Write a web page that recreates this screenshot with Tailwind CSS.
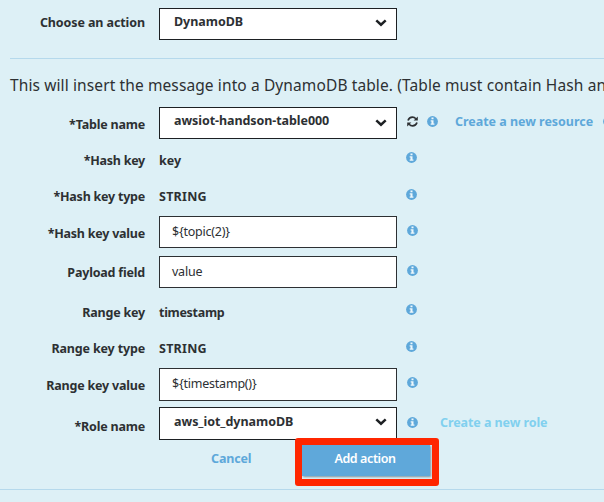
<!DOCTYPE html>
<html lang="en">
<head>
<meta charset="utf-8">
<title>Choose an action</title>
<script src="https://cdn.jsdelivr.net/npm/@tailwindcss/browser@4"></script>
</head>
<body class="h-[502px] w-[604px] overflow-hidden bg-[#ddf0f6] font-['Noto_Sans','Open_Sans',sans-serif] text-[12.5px] leading-[20px] font-bold tracking-[-0.03px] text-[#2d3033]">
<svg class="hidden">
  <symbol id="info" viewBox="0 0 12 12"><circle cx="6" cy="6" r="5.900" fill="#5ea8da"/><path d="M4.900 1.700h2.200v1.800H4.900zM4 4.600h3.100v3.700h1v1.300H4V8.300h.9V5.900H4z" fill="#eef8fc"/></symbol>
  <symbol id="chev" viewBox="0 0 12 8"><path d="M1.300 1.300 6 5.700l4.700-4.400" fill="none" stroke="#1d2023" stroke-width="2.500"/></symbol>
</svg>
<main class="relative flex h-full flex-col pt-2">
  <div class="flex h-[50px] shrink-0 items-start gap-[14px]">
    <label class="mt-[5px] w-[145px] text-right tracking-[-0.1px] whitespace-nowrap">Choose an action</label>
    <div class="flex h-8 w-[238px] justify-between border border-[#1d2023] bg-white pt-[3px] pr-[9px] pl-[14px]"><span>DynamoDB</span><svg class="mt-[7px] h-2 w-3"><use href="#chev"/></svg></div>
  </div>
  <div class="ml-[10px] h-px shrink-0 bg-[#b5d9ec]"></div>
  <p class="h-12 shrink-0 pt-[14px] pl-[10px] text-[15.5px] leading-6 font-normal tracking-[0.11px] whitespace-nowrap">This will insert the message into a DynamoDB table. (Table must contain Hash an</p>

  <div class="flex h-10 shrink-0 items-start">
    <label class="mt-[8px] mr-[14px] w-[145px] shrink-0 text-right tracking-[-0.2px] whitespace-nowrap">*Table name</label>
    <div class="flex h-8 w-[238px] shrink-0 justify-between border border-[#1d2023] bg-white pt-[3px] pr-[9px] pl-[14px]"><span class="tracking-[-0.07px]">awsiot-handson-table000</span><svg class="mt-[8px] h-2 w-3"><use href="#chev"/></svg></div>
    <svg class="mt-[9px] ml-[10px] h-[11px] w-[11px] shrink-0" viewBox="0 0 11 11"><path d="M1 4.500C1.800 2.200 3.400 1.200 5.400 1.200c1.500 0 2.600.6 3.500 1.600M10 6.500C9.200 8.800 7.600 9.800 5.600 9.800 4.100 9.800 3 9.200 2.100 8.200" fill="none" stroke="#2d3033" stroke-width="1.700"/><path d="M10.800.4v4.200H6.600zM.2 10.600V6.400h4.200z" fill="#2d3033"/></svg>
    <svg class="mt-[9px] ml-[9px] h-[11px] w-[11px] shrink-0" viewBox="0 0 12 12"><use href="#info"/></svg>
    <a class="mt-[5px] ml-[17px] w-[138px] shrink-0 whitespace-nowrap text-[#5ea8da]">Create a new resource</a>
    <svg class="mt-[9px] ml-[10px] h-[11px] w-[11px] shrink-0" viewBox="0 0 12 12"><use href="#info"/></svg>
  </div>
  <div class="flex h-9 shrink-0 items-start">
    <label class="mt-[4px] mr-[14px] w-[145px] text-right tracking-[-0.25px]">*Hash key</label>
    <span class="mt-[4px] w-[247px]">key</span>
    <svg class="mt-[5px] h-[11px] w-[11px]" viewBox="0 0 12 12"><use href="#info"/></svg>
  </div>
  <div class="flex h-[33px] shrink-0 items-start">
    <label class="mt-[4px] mr-[14px] w-[145px] text-right tracking-[-0.23px]">*Hash key type</label>
    <span class="mt-[4px] w-[247px] tracking-[0.25px]">STRING</span>
    <svg class="mt-[6px] h-[11px] w-[11px]" viewBox="0 0 12 12"><use href="#info"/></svg>
  </div>
  <div class="flex h-10 shrink-0 items-start">
    <label class="mt-[8px] mr-[14px] w-[145px] text-right tracking-[-0.23px]">*Hash key value</label>
    <div class="h-8 w-[238px] border border-[#2d3033] bg-white pt-[5px] pl-[12px] font-normal tracking-[-0.23px]">${topic(2)}</div>
    <svg class="mt-[9px] ml-[10px] h-[11px] w-[11px]" viewBox="0 0 12 12"><use href="#info"/></svg>
  </div>
  <div class="flex h-10 shrink-0 items-start">
    <label class="mt-[7px] mr-[14px] w-[145px] text-right tracking-[-0.2px]">Payload field</label>
    <div class="h-8 w-[238px] border border-[#2d3033] bg-white pt-[5px] pl-[12px] font-normal tracking-[-0.23px]">value</div>
    <svg class="mt-[9px] ml-[10px] h-[11px] w-[11px]" viewBox="0 0 12 12"><use href="#info"/></svg>
  </div>
  <div class="flex h-9 shrink-0 items-start">
    <label class="mt-[7px] mr-[14px] w-[145px] text-right tracking-[-0.2px]">Range key</label>
    <span class="mt-[7px] w-[247px] tracking-[-0.3px]">timestamp</span>
    <svg class="mt-[8px] h-[11px] w-[11px]" viewBox="0 0 12 12"><use href="#info"/></svg>
  </div>
  <div class="flex h-9 shrink-0 items-start">
    <label class="mt-[7px] mr-[14px] w-[145px] text-right tracking-[-0.15px]">Range key type</label>
    <span class="mt-[7px] w-[247px] tracking-[0.25px]">STRING</span>
    <svg class="mt-[9px] h-[11px] w-[11px]" viewBox="0 0 12 12"><use href="#info"/></svg>
  </div>
  <div class="flex h-[39px] shrink-0 items-start">
    <label class="mt-[8px] mr-[14px] w-[145px] text-right tracking-[-0.2px]">Range key value</label>
    <div class="h-[33px] w-[238px] border border-[#2d3033] bg-white pt-[5px] pl-[12px] font-normal tracking-[-0.22px]">${timestamp()}</div>
    <svg class="mt-[9px] ml-[10px] h-[11px] w-[11px]" viewBox="0 0 12 12"><use href="#info"/></svg>
  </div>
  <div class="flex h-[33px] shrink-0 items-start">
    <label class="mt-[10px] mr-[14px] w-[145px] text-right tracking-[-0.2px]">*Role name</label>
    <div class="flex h-[33px] w-[238px] justify-between border border-[#1d2023] bg-white pt-[4px] pr-[9px] pl-[14px]"><span>aws_iot_dynamoDB</span><svg class="mt-[6px] h-2 w-3"><use href="#chev"/></svg></div>
    <svg class="mt-[10px] ml-[10px] h-[11px] w-[11px]" viewBox="0 0 12 12"><use href="#info"/></svg>
    <a class="mt-[6px] ml-[22px] tracking-[-0.08px] text-[#81d0ef]">Create a new role</a>
  </div>
  <div class="flex h-[49px] shrink-0 items-start">
    <a class="mt-[9px] ml-[211px] w-[91px] tracking-[-0.15px] text-[#5ea8da]">Cancel</a>
    <button class="mt-[5px] h-[31px] w-[128px] bg-[#5fa8da] pr-[2px] pb-[3px] font-semibold tracking-[-0.4px] text-white shadow-[1px_1px_2px_#7f929c]">Add action</button>
  </div>
  <div class="h-px shrink-0 bg-[#b5d9ec]"></div>
  <div class="absolute top-[438px] left-[295px] h-[48px] w-[144px] rounded-[3px] border-[7px] border-[#ff2600]"></div>
</main>
</body>
</html>
